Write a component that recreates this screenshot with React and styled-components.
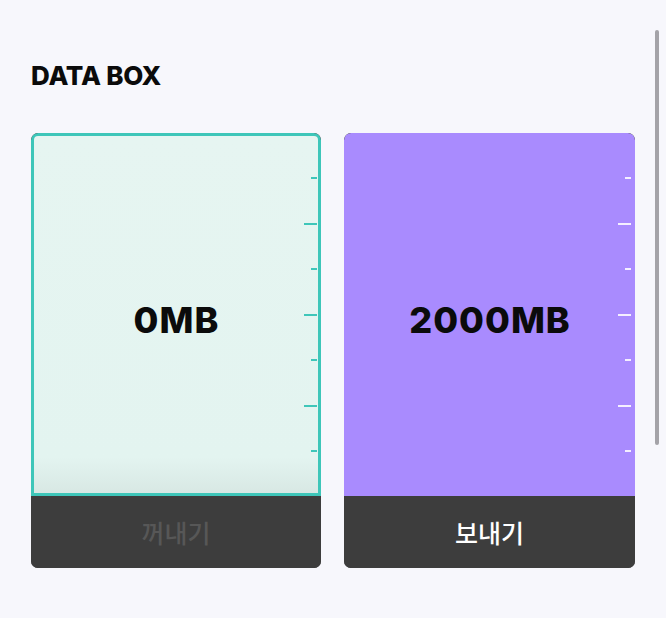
import React from "react";
import styled, { createGlobalStyle } from "styled-components";

const Global = createGlobalStyle`
  html, body {
    margin: 0;
    padding: 0;
    background: #f7f7fc;
    font-family: Inter, "Noto Sans CJK KR", "Noto Sans", sans-serif;
  }
`;

const Page = styled.div`
  position: relative;
  width: 666px;
  height: 618px;
  box-sizing: border-box;
  padding: 61px 31px 0 31px;
  overflow: hidden;
`;

const Title = styled.h1`
  margin: 0 0 42px 0;
  font-size: 26px;
  font-weight: 800;
  color: #0b0b0b;
  letter-spacing: -0.2px;
  line-height: 30px;
`;

const Cards = styled.div`
  display: grid;
  grid-template-columns: 290px 291px;
  gap: 23px;
`;

const Card = styled.div`
  display: flex;
  flex-direction: column;
  height: 435px;
  border-radius: 7px;
  overflow: hidden;
  background: #3d3d3d;
`;

const Tank = styled.div`
  position: relative;
  flex: 1;
  display: flex;
  align-items: center;
  justify-content: center;
  box-sizing: border-box;
  border-radius: 7px 7px 0 0;
  background: ${(p) =>
    p.$active
      ? "#a98bfe"
      : "linear-gradient(to bottom, #e6f5f1 0%, #e3f4f0 90%, #d8e8e4 100%)"};
  border: ${(p) => (p.$active ? "none" : "3px solid #3ec6b9")};
`;

const Amount = styled.div`
  font-size: 36px;
  font-weight: 800;
  color: #0b0b0b;
  letter-spacing: 1px;
  padding-left: 1px;
  margin-top: 11px;
`;

const Scale = styled.div`
  position: absolute;
  right: ${(p) => (p.$active ? "4px" : "1px")};
  top: ${(p) => (p.$active ? "44px" : "41px")};
  display: flex;
  flex-direction: column;
  align-items: flex-end;
  gap: 43.5px;
`;

const Tick = styled.div`
  width: ${(p) => (p.$long ? "13px" : "6px")};
  height: 2px;
  background: ${(p) => (p.$light ? "#f4efff" : "#3ec6b9")};
`;

const Action = styled.button`
  height: 72px;
  flex: none;
  border: none;
  background: #3d3d3d;
  color: ${(p) => (p.disabled ? "#575757" : "#ffffff")};
  font-family: "Noto Sans CJK KR", sans-serif;
  font-size: 25px;
  font-weight: 500;
  padding: 0;
`;

const Scrollbar = styled.div`
  position: absolute;
  right: 7px;
  top: 30px;
  width: 4px;
  height: 415px;
  border-radius: 2px;
  background: #a4a3a8;
`;

const ticks = [false, true, false, true, false, true, false];

const Box = ({ active, amount, label }) => (
  <Card>
    <Tank $active={active}>
      <Amount>{amount}</Amount>
      <Scale $active={active}>
        {ticks.map((l, i) => (
          <Tick key={i} $long={l} $light={active} />
        ))}
      </Scale>
    </Tank>
    <Action disabled={!active}>{label}</Action>
  </Card>
);

export default function App() {
  return (
    <Page>
      <Global />
      <Title>DATA BOX</Title>
      <Cards>
        <Box amount="0MB" label="꺼내기" />
        <Box active amount="2000MB" label="보내기" />
      </Cards>
      <Scrollbar />
    </Page>
  );
}
